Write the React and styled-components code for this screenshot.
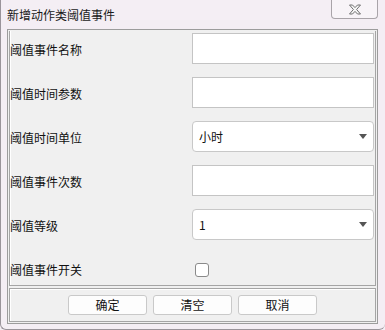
import React, { useState } from "react";
import styled, { createGlobalStyle } from "styled-components";

const GlobalStyle = createGlobalStyle`
  html, body {
    margin: 0;
    padding: 0;
    background: #f4eef4;
  }
  * {
    box-sizing: border-box;
  }
`;

const fields = [
  { label: "阈值事件名称", type: "text" },
  { label: "阈值时间参数", type: "text" },
  { label: "阈值时间单位", type: "select", value: "小时" },
  { label: "阈值事件次数", type: "text" },
  { label: "阈值等级", type: "select", value: "1" },
  { label: "阈值事件开关", type: "check" },
];

export default function App() {
  const [checked, setChecked] = useState(false);

  return (
    <Window>
      <GlobalStyle />
      <TitleBar>
        <Title>新增动作类阈值事件</Title>
        <CloseButton aria-label="关闭">
          <svg width="14" height="11" viewBox="0 0 14 11">
            <path
              d="M1.5 1 L4.5 1 L7 3.6 L9.5 1 L12.5 1 L8.6 5.5 L12.5 10 L9.5 10 L7 7.4 L4.5 10 L1.5 10 L5.4 5.5 Z"
              fill="#f7f7f7"
              stroke="#6f6f6f"
              strokeWidth="1"
              strokeLinejoin="round"
            />
          </svg>
        </CloseButton>
      </TitleBar>
      <Client>
        <FormPanel>
          {fields.map((f) => (
            <Row key={f.label}>
              <Label>{f.label}</Label>
              {f.type === "text" && <TextInput />}
              {f.type === "select" && (
                <SelectBox>
                  <span>{f.value}</span>
                  <Arrow />
                </SelectBox>
              )}
              {f.type === "check" && (
                <CheckBox
                  $checked={checked}
                  onClick={() => setChecked((c) => !c)}
                />
              )}
            </Row>
          ))}
        </FormPanel>
        <ButtonPanel>
          <Button>确定</Button>
          <Button>清空</Button>
          <Button>取消</Button>
        </ButtonPanel>
      </Client>
    </Window>
  );
}

const Window = styled.div`
  width: 385px;
  height: 330px;
  background: #f4eef4;
  border-left: 1px solid #9a949a;
  border-bottom: 1px solid #9a949a;
  border-radius: 0 0 6px 6px;
  overflow: hidden;
  font-family: "Noto Sans CJK SC", "Noto Sans", sans-serif;
  font-size: 12px;
  color: #000;
`;

const TitleBar = styled.div`
  height: 29px;
  display: flex;
  align-items: flex-start;
  padding-left: 6px;
`;

const Title = styled.div`
  align-self: center;
  font-size: 12px;
  line-height: 14px;
  color: #1a1a1a;
`;

const CloseButton = styled.button`
  margin-left: auto;
  margin-right: 7px;
  width: 47px;
  height: 19px;
  padding: 0;
  display: flex;
  align-items: center;
  justify-content: center;
  background: #f8f4f8;
  border: 1px solid #a9a4a9;
  border-top: none;
  border-radius: 0 0 4px 4px;
`;

const Client = styled.div`
  margin-left: 6px;
  width: 371px;
  height: 295px;
  background: #f0f0f0;
  border: 1px solid #9c9c9c;
  padding: 1px;
  display: flex;
  flex-direction: column;
  gap: 2px;
`;

const FormPanel = styled.div`
  height: 255px;
  border: 1px solid #a5a5a5;
  border-top: none;
  box-shadow: inset 1px 0 0 #fff;
  padding: 2px 1px 1px 0;
  display: flex;
  flex-direction: column;
  gap: 13px;
`;

const Row = styled.div`
  height: 31px;
  display: grid;
  grid-template-columns: 182px 182px;
  align-items: center;
`;

const Label = styled.div`
  font-size: 12px;
  line-height: 14px;
  padding-top: 2px;
  color: #111;
`;

const TextInput = styled.input`
  width: 182px;
  height: 31px;
  border: 1px solid #c4c4c4;
  background: #fff;
  outline: none;
`;

const SelectBox = styled.div`
  width: 182px;
  height: 31px;
  border: 1px solid #c8c8c8;
  border-radius: 4px;
  background: #fff;
  display: flex;
  align-items: center;
  justify-content: space-between;
  padding: 0 6px 0 6px;
  font-size: 12px;
  color: #111;
`;

const Arrow = styled.span`
  width: 0;
  height: 0;
  border-left: 4px solid transparent;
  border-right: 4px solid transparent;
  border-top: 5px solid #555;
`;

const CheckBox = styled.span`
  width: 14px;
  height: 14px;
  margin-left: 3px;
  margin-top: 2px;
  border: 1px solid #8a8a8a;
  border-radius: 3px;
  background: ${(p) => (p.$checked ? "#3c7fd8" : "#fff")};
`;

const ButtonPanel = styled.div`
  height: 34px;
  border: 1px solid #a5a5a5;
  box-shadow: inset 1px 1px 0 #fff;
  display: flex;
  align-items: center;
  justify-content: center;
  gap: 6px;
`;

const Button = styled.button`
  width: 79px;
  height: 20px;
  padding: 0;
  border: 1px solid #c9c9c9;
  border-radius: 3px;
  background: #fdfdfd;
  font-family: "Noto Sans CJK SC", "Noto Sans", sans-serif;
  font-size: 12px;
  line-height: 16px;
  color: #111;
`;
